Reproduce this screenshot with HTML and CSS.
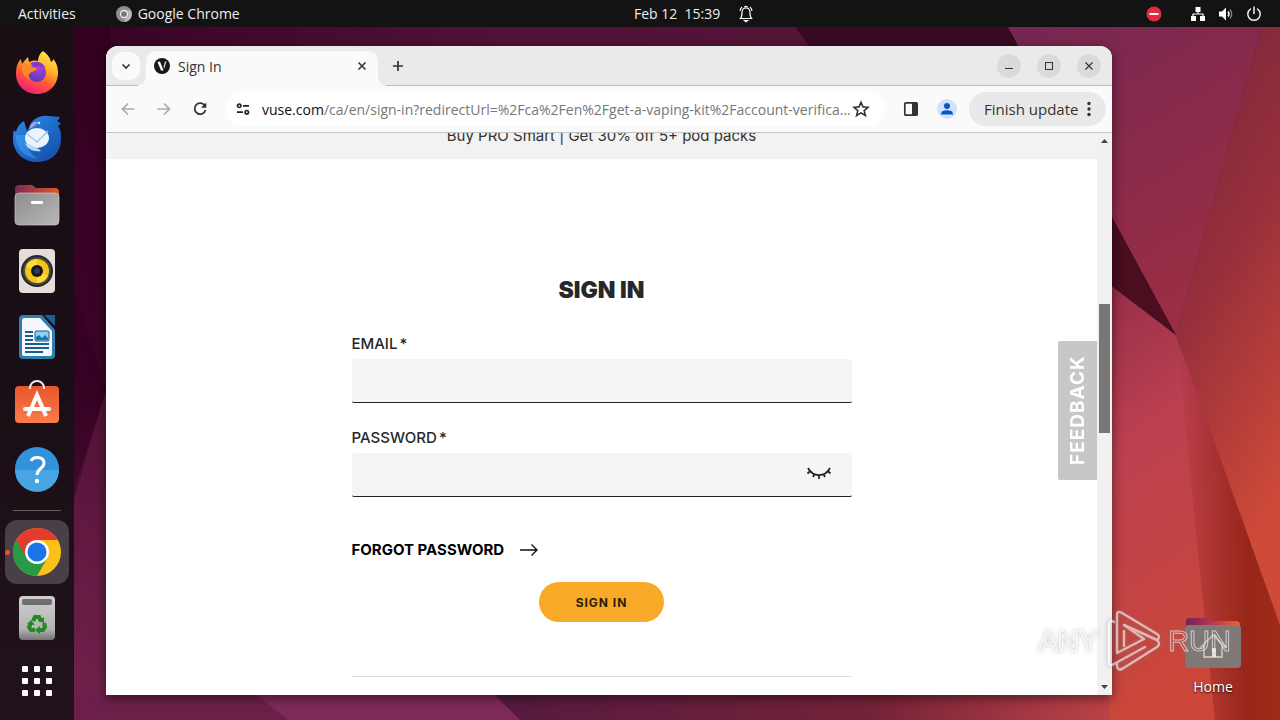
FILE: index.html
```html
<!DOCTYPE html>
<html lang="en">
<head>
<meta charset="UTF-8">
<title>Sign In</title>
<link rel="stylesheet" href="styles.css">
</head>
<body>

<!-- Wallpaper -->
<svg class="wallpaper" viewBox="0 0 1280 720" preserveAspectRatio="none" aria-hidden="true">
    <defs>
        <linearGradient id="wBase" x1="0" y1="0" x2="1" y2="1">
            <stop offset="0" stop-color="#2c001e"/>
            <stop offset=".3" stop-color="#470c32"/>
            <stop offset=".6" stop-color="#5c1a3c"/>
            <stop offset="1" stop-color="#7a2038"/>
        </linearGradient>
        <linearGradient id="wLeft" x1="0" y1="0" x2="0" y2="1">
            <stop offset="0" stop-color="#33001f"/>
            <stop offset=".5" stop-color="#3c0428"/>
            <stop offset="1" stop-color="#6e2149"/>
        </linearGradient>
        <linearGradient id="wTop" x1="0" y1="0" x2="1" y2="0">
            <stop offset="0" stop-color="#330020"/>
            <stop offset=".5" stop-color="#521236"/>
            <stop offset="1" stop-color="#571636"/>
        </linearGradient>
        <linearGradient id="wUpper" x1="0" y1="0" x2=".5" y2="1">
            <stop offset="0" stop-color="#762652"/>
            <stop offset="1" stop-color="#9a2e44"/>
        </linearGradient>
        <linearGradient id="wRight" x1="0" y1="0" x2=".3" y2="1">
            <stop offset="0" stop-color="#74233c"/>
            <stop offset=".5" stop-color="#98303b"/>
            <stop offset="1" stop-color="#cf4a38"/>
        </linearGradient>
        <linearGradient id="wLower" x1="0" y1="0" x2=".3" y2="1">
            <stop offset="0" stop-color="#8f2b48"/>
            <stop offset=".4" stop-color="#bb4050"/>
            <stop offset="1" stop-color="#cc4738"/>
        </linearGradient>
        <linearGradient id="wFold" x1="0" y1="0" x2="1" y2="0">
            <stop offset="0" stop-color="#8c2323" stop-opacity="0"/>
            <stop offset=".7" stop-color="#962619"/>
            <stop offset="1" stop-color="#a02c18"/>
        </linearGradient>
        <linearGradient id="wBottom" x1="0" y1="0" x2="1" y2="0">
            <stop offset="0" stop-color="#551a40"/>
            <stop offset=".6" stop-color="#752238"/>
            <stop offset="1" stop-color="#c04448"/>
        </linearGradient>
    </defs>
    <rect width="1280" height="720" fill="url(#wBase)"/>
    <rect y="0" width="1010" height="60" fill="url(#wTop)"/>
    <path d="M0 27H110V720H0Z" fill="url(#wLeft)"/>
    <path d="M74 490L106 390V720H74Z" fill="#7a2852" opacity=".35"/>
    <path d="M74 290L106 390L74 500Z" fill="#28001a" opacity=".35"/>
    <path d="M0 690H270L290 720H0Z" fill="#6c2049"/>
    <path d="M250 690H490L520 720H288Z" fill="#7e2a59"/>
    <path d="M490 690H1125V720H520Z" fill="url(#wBottom)"/>
    <path d="M795 27H1010L1040 100H850Z" fill="#370a22"/>
    <path d="M1008 27H1262L1176 335L1100 195Z" fill="url(#wUpper)"/>
    <path d="M1090 270L1176 335L1280 612V720H1110Z" fill="url(#wLower)"/>
    <path d="M1176 335L1280 600V720H1215Z" fill="url(#wFold)"/>
    <path d="M1262 27H1280V625L1176 335Z" fill="url(#wRight)"/>
    <path d="M1100 195L1176 335L1100 277Z" fill="#4a0e1e"/>
</svg>

<!-- Top Bar -->
<header class="topbar">
    <div class="topbar-left">
        <button class="topbar-item">Activities</button>
        <button class="topbar-item topbar-app">
            <svg width="16" height="16" viewBox="0 0 16 16"><circle cx="8" cy="8" r="8" fill="#8d8d8d"/><path d="M8 4.500H15A8 8 0 0 1 8 16L11 9Z" fill="#b9b9b9"/><circle cx="8" cy="8" r="3.500" fill="#777" stroke="#eee" stroke-width="1.300"/></svg>
            Google Chrome
        </button>
    </div>
    <button class="topbar-item topbar-clock">
        <span>Feb 12&nbsp; 15:39</span>
        <svg width="16" height="18" viewBox="0 0 16 18" fill="none" stroke="#fff" stroke-width="1.200"><path d="M2.500 13.500C4 12 4 10 4 7.500C4 4.500 5.500 3 8 3S12 4.500 12 7.500C12 10 12 12 13.500 13.500Z"/><path d="M6.500 2.500C6.500 1 9.500 1 9.500 2.500M2 6Q2.300 3.500 4 2M14 6Q13.700 3.500 12 2"/><path d="M6.500 15.500H9.500L8 16.800Z" fill="#fff"/></svg>
    </button>
    <div class="topbar-status">
        <svg class="status-stop" width="16" height="16" viewBox="0 0 16 16"><circle cx="8" cy="8" r="7.500" fill="#e32b3e"/><rect x="3.500" y="7" width="9" height="2" fill="#fff"/></svg>
        <svg width="16" height="16" viewBox="0 0 16 16" fill="#fff"><rect x="5.500" y="1" width="5" height="5"/><rect x="1" y="10" width="5" height="5"/><rect x="10" y="10" width="5" height="5"/><path d="M3 11V8H13V11M8 5V8" fill="none" stroke="#fff" stroke-width="1.200"/></svg>
        <svg width="16" height="16" viewBox="0 0 16 16"><path d="M1 5.500H4L8 1.500V14.500L4 10.500H1Z" fill="#fff"/><path d="M10 5.500Q12 8 10 10.500" fill="none" stroke="#fff" stroke-width="1.500"/><path d="M12 3.500Q15.500 8 12 12.500" fill="none" stroke="#888" stroke-width="1.300"/></svg>
        <svg width="16" height="16" viewBox="0 0 16 16" fill="none" stroke="#fff" stroke-width="1.400" stroke-linecap="round"><path d="M4.500 3A6.200 6.200 0 1 0 11.500 3M8 1V7.500"/></svg>
    </div>
</header>

<div class="desktop">

    <!-- Dock -->
    <nav class="dock" aria-label="Dock">
        <button class="dock-item" aria-label="Firefox">
            <svg viewBox="0 0 48 48">
                <defs>
                    <linearGradient id="ffBody" x1=".8" y1="0" x2=".3" y2="1"><stop offset="0" stop-color="#fff04a"/><stop offset=".35" stop-color="#ffb52b"/><stop offset=".65" stop-color="#ff5a36"/><stop offset="1" stop-color="#f3197e"/></linearGradient>
                    <radialGradient id="ffCore" cx=".6" cy=".2" r=".9"><stop offset="0" stop-color="#b13fe0"/><stop offset="1" stop-color="#493bb5"/></radialGradient>
                </defs>
                <path d="M30 2C34 5 37 8 38 13C40 12 40 11 40 10C44 14 45 19 45 24C45 36 36 45 24 45S3 36 3 25C3 19 4 14 8 10L9 15C11 12 13 10 15 8L16 13C19 12 21 11 25 12C25 8 27 4 30 2Z" fill="url(#ffBody)"/>
                <circle cx="24" cy="24" r="9" fill="url(#ffCore)"/>
                <path d="M17 15C21 11 30 12 33 20C29 16 25 17 23 18Z" fill="#8438cf"/>
                <path d="M9 15C13 15 16 18 24 19C23 23 19 22 17 24C15 26 15 29 17 31C11 29 8 22 9 15Z" fill="#ff8a25"/>
            </svg>
        </button>
        <button class="dock-item" aria-label="Thunderbird">
            <svg viewBox="0 0 48 48">
                <defs><linearGradient id="tbBody" x1="0" y1="0" x2=".8" y2="1"><stop offset="0" stop-color="#2b8ce8"/><stop offset=".6" stop-color="#1c68c8"/><stop offset="1" stop-color="#174fa8"/></linearGradient></defs>
                <path d="M17 10C20 3 29 0 35 1C40 1 43 2 47 2C46 4 45 5 44 6C46 7 47 8 48 9L45 11C48 15 48 19 48 24C48 38 38 47 24 47S0 37 0 24C0 20 0 17 1 15L3 17C4 13 6 9 11 6C12 10 13 13 14 16Z" fill="url(#tbBody)"/>
                <path d="M2 20C4 34 10 42 25 44C14 37 12 28 13 20Z" fill="#4aa2f4" opacity=".5"/>
                <ellipse cx="24" cy="23" rx="12" ry="10" fill="#e9f4fc"/>
                <path d="M14 19L24 27L35 16" fill="none" stroke="#a9c7df" stroke-width="1.500"/>
                <path d="M18 30C22 33 24 32 28 36C20 37 14 34 12 28Z" fill="#b8daf8"/>
                <path d="M17 11Q20 6 25 7Q23 10 17 14Z" fill="#a9a0ec"/><circle cx="26" cy="8" r="1.300" fill="#d8ecff"/>
            </svg>
        </button>
        <button class="dock-item" aria-label="Files">
            <svg viewBox="0 0 48 48">
                <defs>
                    <linearGradient id="fBack" x1="0" y1="0" x2="1" y2="0"><stop offset="0" stop-color="#7a2a58"/><stop offset="1" stop-color="#e4562a"/></linearGradient>
                    <linearGradient id="fFront" x1="0" y1="0" x2="1" y2="1"><stop offset="0" stop-color="#8d8d8d"/><stop offset="1" stop-color="#b8b8b8"/></linearGradient>
                </defs>
                <path d="M6 4H19L23 7H42Q46 7 46 11V20H2V8Q2 4 6 4Z" fill="url(#fBack)"/>
                <rect x="2" y="12" width="44" height="32" rx="4" fill="url(#fFront)"/>
                <rect x="2" y="12" width="44" height="32" rx="4" fill="none" stroke="#c9c9c9" stroke-width=".7"/>
                <rect x="18" y="20" width="12" height="3" rx="1" fill="#fff"/>
            </svg>
        </button>
        <button class="dock-item" aria-label="Rhythmbox">
            <svg viewBox="0 0 48 48">
                <rect x="6" y="2" width="36" height="44" rx="4" fill="#e3dfd6"/>
                <circle cx="24" cy="24" r="16" fill="#26262c"/><circle cx="24" cy="24" r="14" fill="#4c4a42"/>
                <circle cx="24" cy="24" r="12" fill="#f5c518"/><path d="M13 19A12 12 0 0 1 24 12V24ZM35 29A12 12 0 0 1 24 36V24Z" fill="#ffd93b"/>
                <circle cx="24" cy="24" r="6" fill="#17181e"/><circle cx="24" cy="24" r="3" fill="#2d3b52"/>
            </svg>
        </button>
        <button class="dock-item" aria-label="LibreOffice Writer">
            <svg viewBox="0 0 48 48">
                <path d="M10 2H29L42 17V42Q42 46 38 46H10Q6 46 6 42V6Q6 2 10 2Z" fill="#2f7fae"/>
                <path d="M31 2H42V13Z" fill="#1c5f8c"/>
                <path d="M11 5H27L39 18V41Q39 43 37 43H11Q9 43 9 41V7Q9 5 11 5Z" fill="#f4f8fb"/>
                <g fill="#1a5f8c"><rect x="12" y="18" width="8" height="2"/><rect x="12" y="22" width="8" height="2"/><rect x="12" y="26" width="8" height="2"/><rect x="12" y="30" width="24" height="2"/><rect x="12" y="34" width="24" height="2"/><rect x="12" y="38" width="18" height="2"/></g>
                <rect x="22" y="18" width="14" height="10" rx="1" fill="#8fd0f5" stroke="#1a5f8c"/>
                <path d="M23 27V24L26 22L29 25L32 22L35 25V27Z" fill="#1875b0"/>
            </svg>
        </button>
        <button class="dock-item" aria-label="Ubuntu Software">
            <svg viewBox="0 0 48 48">
                <defs><linearGradient id="bag" x1="0" y1="0" x2="0" y2="1"><stop offset="0" stop-color="#e9552b"/><stop offset="1" stop-color="#fb7c4a"/></linearGradient></defs>
                <rect x="2" y="7" width="44" height="37" rx="4" fill="url(#bag)"/>
                <path d="M17 10V9A7 7 0 0 1 31 9V10" fill="none" stroke="#f6e6df" stroke-width="2"/>
                <path d="M15 37L24 16L33 37" fill="none" stroke="#fff" stroke-width="4"/>
                <rect x="10" y="28" width="28" height="4" rx="2" fill="#fff"/>
            </svg>
        </button>
        <button class="dock-item" aria-label="Help">
            <svg viewBox="0 0 48 48">
                <circle cx="24" cy="24" r="22" fill="#3293dc"/><path d="M2 25H46A22 22 0 0 1 2 25Z" fill="#46a5e2"/>
                <path d="M18 16C20 11 31 11 31 18C31 24 24 23 24 30" fill="none" stroke="#fff" stroke-width="3"/><circle cx="24" cy="36" r="2.200" fill="#fff"/>
            </svg>
        </button>
        <hr class="dock-line">
        <button class="dock-item dock-active" aria-label="Google Chrome">
            <svg viewBox="0 0 48 48">
                <circle cx="24" cy="24" r="24" fill="#fbc116"/>
                <path d="M3.200 12A24 24 0 0 0 24 48L34.400 30L24 24Z" fill="#269a45"/>
                <path d="M3.200 12A24 24 0 0 1 44.800 12H24L13.600 30Z" fill="#e33b2e"/>
                <circle cx="24" cy="24" r="12" fill="#fff"/><circle cx="24" cy="24" r="9.500" fill="#1a73e8"/>
            </svg>
        </button>
        <button class="dock-item" aria-label="Trash">
            <svg viewBox="0 0 48 48">
                <defs><linearGradient id="bin" x1="0" y1="0" x2="0" y2="1"><stop offset="0" stop-color="#cfcfcf"/><stop offset=".75" stop-color="#b4b4b4"/><stop offset="1" stop-color="#757275"/></linearGradient></defs>
                <rect x="6" y="2" width="36" height="44" rx="4" fill="url(#bin)"/>
                <rect x="9" y="5" width="30" height="6" rx="2" fill="#6f6f6f"/>
                <g fill="none" stroke="#248a24" stroke-width="4"><path d="M20 27L22 23H26L28 27"/><path d="M31 29L32 33L30 36H26"/><path d="M22 36H18L16 33L18 29"/></g>
                <path d="M25 27L31 29L31 23ZM27 32V40L22 36ZM14 30L18 26L22 31Z" fill="#248a24"/>
            </svg>
        </button>
        <button class="dock-item dock-apps" aria-label="Show Applications">
            <svg viewBox="0 0 48 48" fill="#fff"><rect x="9" y="9" width="6" height="6" rx="1"/><rect x="21" y="9" width="6" height="6" rx="1"/><rect x="33" y="9" width="6" height="6" rx="1"/><rect x="9" y="21" width="6" height="6" rx="1"/><rect x="21" y="21" width="6" height="6" rx="1"/><rect x="33" y="21" width="6" height="6" rx="1"/><rect x="9" y="33" width="6" height="6" rx="1"/><rect x="21" y="33" width="6" height="6" rx="1"/><rect x="33" y="33" width="6" height="6" rx="1"/></svg>
        </button>
    </nav>

    <!-- Browser Window -->
    <main class="workspace">
        <div class="window">
            <div class="tabstrip">
                <button class="tab-search" aria-label="Search tabs"><svg width="12" height="12" viewBox="0 0 12 12"><path d="M2.500 4.500L6 8L9.500 4.500" fill="none" stroke="#333" stroke-width="1.700"/></svg></button>
                <div class="tab">
                    <svg width="16" height="16" viewBox="0 0 16 16"><circle cx="8" cy="8" r="8" fill="#16171a"/><path d="M3.500 4L7 12.500H9.500L6 3.500Z" fill="#fff"/><path d="M9.500 9L11 3.500H12.500L10 11Z" fill="#ddd"/></svg>
                    <span class="tab-title">Sign In</span>
                    <button class="icon-btn" aria-label="Close tab"><svg width="12" height="12" viewBox="0 0 12 12"><path d="M2.500 2.500L9.500 9.500M9.500 2.500L2.500 9.500" stroke="#333" stroke-width="1.600"/></svg></button>
                </div>
                <button class="icon-btn new-tab" aria-label="New tab"><svg width="12" height="12" viewBox="0 0 12 12"><path d="M6 1V11M1 6H11" stroke="#333" stroke-width="1.700"/></svg></button>
                <div class="window-controls">
                    <button aria-label="Minimize"><svg width="12" height="12" viewBox="0 0 12 12"><path d="M2 8.500H10" stroke="#333"/></svg></button>
                    <button aria-label="Maximize"><svg width="12" height="12" viewBox="0 0 12 12"><rect x="2.500" y="2.500" width="7" height="7" fill="none" stroke="#333"/></svg></button>
                    <button aria-label="Close"><svg width="12" height="12" viewBox="0 0 12 12"><path d="M2.500 2.500L9.500 9.500M9.500 2.500L2.500 9.500" stroke="#333" stroke-width="1.200"/></svg></button>
                </div>
            </div>

            <div class="toolbar">
                <button class="tool-btn" aria-label="Back"><svg width="16" height="16" viewBox="0 0 16 16"><path d="M14.500 8H2.500M8 2.500L2.500 8L8 13.500" fill="none" stroke="#aaa" stroke-width="1.700"/></svg></button>
                <button class="tool-btn" aria-label="Forward"><svg width="16" height="16" viewBox="0 0 16 16"><path d="M1.500 8H13.500M8 2.500L13.500 8L8 13.500" fill="none" stroke="#aaa" stroke-width="1.700"/></svg></button>
                <button class="tool-btn" aria-label="Reload"><svg width="16" height="16" viewBox="0 0 16 16"><path d="M13 5A5.500 5.500 0 1 0 13.500 9" fill="none" stroke="#333" stroke-width="1.800"/><path d="M14.300 1.500V6.700H9Z" fill="#333"/></svg></button>
                <div class="urlbar">
                    <button class="site-btn" aria-label="View site information"><svg width="14" height="14" viewBox="0 0 14 14" fill="none" stroke="#222" stroke-width="1.700"><circle cx="3.200" cy="3.800" r="1.700"/><path d="M7 3.800H13M1 10.200H7"/><circle cx="10.800" cy="10.200" r="1.700"/></svg></button>
                    <div class="url" role="textbox" aria-label="Address"><b>vuse.com</b>/ca/en/sign-in?redirectUrl=%2Fca%2Fen%2Fget-a-vaping-kit%2Faccount-verifica…</div>
                    <button class="icon-btn" aria-label="Bookmark this tab"><svg width="18" height="18" viewBox="0 0 18 18"><path d="M9 2.200L11 6.900L16 7.300L12.200 10.600L13.400 15.500L9 12.900L4.600 15.500L5.800 10.600L2 7.300L7 6.900Z" fill="none" stroke="#333" stroke-width="1.600"/></svg></button>
                </div>
                <button class="tool-btn" aria-label="Side panel"><svg width="16" height="16" viewBox="0 0 16 16"><rect x="1.800" y="1.800" width="12.400" height="12.400" rx="1" fill="none" stroke="#333" stroke-width="1.700"/><path d="M9 2H14V14H9Z" fill="#333"/></svg></button>
                <button class="tool-btn" aria-label="Profile"><svg width="20" height="20" viewBox="0 0 20 20"><circle cx="10" cy="10" r="10" fill="#d0e2fc"/><circle cx="10" cy="7" r="3" fill="#0b57c0"/><path d="M4 15.500C4 12 7 11.300 10 11.300S16 12 16 15.500Z" fill="#0b57c0"/></svg></button>
                <button class="update-btn">Finish update <svg width="4" height="16" viewBox="0 0 4 16" fill="#333"><circle cx="2" cy="2.500" r="1.700"/><circle cx="2" cy="8" r="1.700"/><circle cx="2" cy="13.500" r="1.700"/></svg></button>
            </div>

            <!-- Page -->
            <div class="viewport">
                <div class="page">
                    <p class="promo">Buy PRO Smart | Get 30% off 5+ pod packs</p>
                    <form class="login">
                        <h1>SIGN IN</h1>
                        <label for="email">EMAIL<span>*</span></label>
                        <div class="field"><input type="email" id="email"></div>
                        <label for="password">PASSWORD<span>*</span></label>
                        <div class="field">
                            <input type="password" id="password">
                            <button type="button" class="show-pass" aria-label="Show password"><svg width="26" height="16" viewBox="0 0 26 16" fill="none" stroke="#222" stroke-width="1.700"><path d="M2 3C7 12.500 19 12.500 24 3"/><path d="M4.300 6L1.500 8.500M21.700 6L24.500 8.500M8.500 9L7 12M17.500 9L19 12M13 10V14"/></svg></button>
                        </div>
                        <a class="forgot" href="#">FORGOT PASSWORD <svg width="18" height="12" viewBox="0 0 18 12"><path d="M0 6H17M11.500 .5L17 6L11.500 11.500" fill="none" stroke="#111" stroke-width="1.400"/></svg></a>
                        <button type="button" class="submit">SIGN IN</button>
                        <hr class="divider">
                    </form>
                </div>
                <div class="scrollbar">
                    <svg width="15" height="16" viewBox="0 0 15 16"><path d="M4 10L7.500 6L11 10Z" fill="#444"/></svg>
                    <div class="scroll-track"><div class="scroll-thumb"></div></div>
                    <svg width="15" height="16" viewBox="0 0 15 16"><path d="M4 6L7.500 10L11 6Z" fill="#444"/></svg>
                </div>
                <button class="feedback">FEEDBACK</button>
            </div>
        </div>

        <a class="home" href="#">
            <svg width="56" height="52" viewBox="0 0 56 52">
                <defs><linearGradient id="hBack" x1="0" y1="0" x2="1" y2="0"><stop offset="0" stop-color="#762056"/><stop offset=".5" stop-color="#b8385a"/><stop offset="1" stop-color="#f0602a"/></linearGradient></defs>
                <path d="M5 1H21L26 4H51Q55 4 55 8V20H1V5Q1 1 5 1Z" fill="url(#hBack)"/>
                <rect x="0" y="8" width="56" height="43" rx="4" fill="#807876"/>
                <path d="M15 31L28 18L41 31M19 29V40H37V29" fill="none" stroke="#c4bdba" stroke-width="1.800"/><rect x="27" y="31" width="4" height="9" fill="#e6e2e0"/>
            </svg>
            Home
        </a>
    </main>
</div>

<!-- Watermark -->
<div class="watermark">
    <span>ANY</span>
    <svg width="56" height="64" viewBox="0 0 56 64" fill="none" stroke="#fff" stroke-width="2.500" stroke-linejoin="round" stroke-linecap="round"><path d="M9 13Q4 10 4 16V54Q4 58 9 55L40 38"/><path d="M12 42V6Q12 1 17 4L52 25Q56 28 52 31L19 16"/><path d="M19 16L39 30L12 44"/><path d="M19 22V37"/><path d="M52 31Q56 35 52 38L17 60Q12 62 12 56V54"/></svg>
    <span>RUN</span>
</div>

</body>
</html>
```
FILE: styles.css
```css
/* General */
* {
    box-sizing: border-box;
}

html, body {
    margin: 0;
    padding: 0;
    height: 100%;
}

body {
    display: flex;
    flex-direction: column;
    overflow: hidden;
    background: #2c001e;
    color: #333;
    font-family: "Open Sans", "Noto Sans", sans-serif;
    font-size: 14px;
}

button {
    margin: 0;
    padding: 0;
    border: 0;
    background: none;
    color: inherit;
    font: inherit;
    cursor: pointer;
}

svg {
    display: block;
    flex: none;
}

.wallpaper {
    position: absolute;
    top: 0;
    left: 0;
    width: 100%;
    height: 100%;
    z-index: -1;
}

/* Top bar */
.topbar {
    display: flex;
    align-items: center;
    height: 27px;
    flex: none;
    background: #131313;
    color: #eee;
}

.topbar-left {
    display: flex;
    gap: 40px;
    width: 50%;
    padding-left: 18px;
    margin-right: -6px;
}

.topbar-item {
    display: flex;
    align-items: center;
    gap: 6px;
}

.topbar-clock {
    gap: 18px;
}

.topbar-status {
    display: flex;
    gap: 12px;
    margin-left: auto;
    padding-right: 18px;
}

.status-stop {
    margin-right: 16px;
}

.desktop {
    display: flex;
    flex: 1;
    min-height: 0;
}

/* Dock */
.dock {
    display: flex;
    flex-direction: column;
    flex: none;
    align-items: center;
    gap: 2px;
    width: 74px;
    padding-top: 14px;
    background: rgba(20, 16, 19, 0.85);
}

.dock-item {
    display: flex;
    align-items: center;
    justify-content: center;
    position: relative;
    width: 64px;
    height: 64px;
    flex: none;
    border-radius: 12px;
}

.dock-item svg {
    width: 48px;
    height: 48px;
}

.dock-active {
    background: #484046;
}

.dock-active::before {
    content: "";
    position: absolute;
    left: 0;
    width: 5px;
    height: 5px;
    border-radius: 50%;
    background: #e95420;
}

.dock-line {
    width: 48px;
    height: 1px;
    flex: none;
    margin: 7px 0;
    border: 0;
    background: #655c61;
}

.dock-apps {
    height: 58px;
}

/* Browser window */
.workspace {
    display: flex;
    position: relative;
    flex: 1;
    min-width: 0;
    padding: 19px 168px 25px 32px;
}

.window {
    display: flex;
    flex-direction: column;
    flex: 1;
    min-width: 0;
    overflow: hidden;
    border-radius: 12px 12px 0 0;
    background: #fff;
    box-shadow: 0 3px 12px rgba(0, 0, 0, 0.5);
}

.tabstrip {
    display: flex;
    align-items: center;
    height: 40px;
    flex: none;
    padding: 0 11px 0 6px;
    border-bottom: 1px solid #bdbdbd;
    background: #eaeaea;
}

.tab-search {
    display: grid;
    place-items: center;
    width: 28px;
    height: 28px;
    border-radius: 10px;
    background: #fafafa;
}

.tab {
    display: flex;
    align-items: center;
    gap: 8px;
    position: relative;
    align-self: flex-end;
    width: 232px;
    height: 35px;
    margin: 0 8px -1px 6px;
    padding: 0 4px 5px 8px;
    border-radius: 10px 10px 0 0;
    background: #fafafa;
}

/* flared feet of the tab */
.tab::before, .tab::after {
    content: "";
    position: absolute;
    bottom: 0;
    width: 8px;
    height: 8px;
}

.tab::before {
    left: -8px;
    background: radial-gradient(circle at 0 0, #eaeaea 7px, #fafafa 8px);
}

.tab::after {
    right: -8px;
    background: radial-gradient(circle at 100% 0, #eaeaea 7px, #fafafa 8px);
}

.tab-title {
    flex: 1;
}

.icon-btn {
    display: grid;
    place-items: center;
    width: 24px;
    height: 24px;
}

.window-controls {
    display: flex;
    gap: 16px;
    margin-left: auto;
}

.window-controls button {
    display: grid;
    place-items: center;
    width: 24px;
    height: 24px;
    border-radius: 50%;
    background: #dadada;
}

.toolbar {
    display: flex;
    align-items: center;
    gap: 4px;
    height: 47px;
    flex: none;
    padding: 0 6px;
    border-bottom: 1px solid #c4c4c4;
    background: #fafafa;
}

.tool-btn {
    display: grid;
    place-items: center;
    width: 32px;
    height: 32px;
}

.urlbar {
    display: flex;
    align-items: center;
    flex: 1;
    min-width: 0;
    height: 34px;
    margin: 0 6px;
    padding: 0 12px 0 10px;
    border-radius: 17px;
    background: #fff;
}

.site-btn {
    margin-right: 12px;
}

.url {
    flex: 1;
    min-width: 0;
    white-space: nowrap;
    color: #777;
}

.url b {
    color: #111;
    font-weight: 400;
}

.update-btn {
    display: flex;
    align-items: center;
    justify-content: space-between;
    width: 137px;
    height: 34px;
    margin-left: 2px;
    padding: 0 15px;
    border-radius: 17px;
    background: #e9e9e9;
    font-size: 15px;
}

/* Page */
.viewport {
    display: flex;
    position: relative;
    flex: 1;
    min-height: 0;
    overflow: hidden;
}

.page {
    flex: 1;
    overflow: hidden;
    font-family: Inter, sans-serif;
}

.promo {
    margin: -20px 0 0;
    background: #f2f2f2;
    font-size: 15px;
    line-height: 46px;
    text-align: center;
}

.login {
    display: flex;
    flex-direction: column;
    max-width: 500px;
    margin: 0 auto;
    padding-top: 115px;
    color: #26282a;
}

.login h1 {
    margin: 0 0 28px;
    font-size: 23px;
    font-weight: 900;
    line-height: 32px;
    text-align: center;
}

.login label {
    margin-bottom: 5px;
    font-size: 15px;
    font-weight: 500;
    line-height: 20px;
}

.login label span {
    margin-left: 2px;
}

.field {
    display: flex;
    align-items: center;
    height: 44px;
    margin-bottom: 25px;
    border-bottom: 1px solid #222;
    border-radius: 2px;
    background: #f5f5f5;
}

.field input {
    flex: 1;
    height: 100%;
    padding: 0 12px;
    border: 0;
    outline: 0;
    background: none;
}

.show-pass {
    padding: 0 20px 4px 0;
}

.forgot {
    display: flex;
    align-items: center;
    gap: 16px;
    margin: 18px 0 22px;
    color: #000;
    font-size: 15px;
    font-weight: 700;
    line-height: 20px;
    text-decoration: none;
}

.submit {
    align-self: center;
    width: 125px;
    height: 40px;
    border-radius: 20px;
    background: #f9a928;
    color: #2a1c05;
    font-size: 12px;
    font-weight: 700;
    letter-spacing: 1px;
}

.divider {
    width: 100%;
    margin: 54px 0 0;
    border: 0;
    border-top: 1px solid #ddd;
}

.scrollbar {
    display: flex;
    flex-direction: column;
    width: 15px;
    background: #f1f1f1;
}

.scroll-track {
    display: grid;
    grid-template-rows: 155fr 129fr 246fr;
    flex: 1;
    padding: 0 2px;
}

.scroll-thumb {
    grid-row: 2;
    background: #777;
}

.feedback {
    position: absolute;
    top: 37%;
    right: 15px;
    width: 39px;
    height: 139px;
    border-radius: 0 2px 2px 0;
    background: #c8c6c6;
    color: #fff;
    font-family: Inter, sans-serif;
    font-size: 19px;
    font-weight: 700;
    letter-spacing: 1px;
    writing-mode: vertical-rl;
    transform: rotate(180deg);
}

/* Desktop icon */
.home {
    display: flex;
    flex-direction: column;
    align-items: center;
    gap: 8px;
    position: absolute;
    right: 39px;
    bottom: 23px;
    color: #fff;
    line-height: 20px;
    text-decoration: none;
    text-shadow: 0 1px 2px #000;
}

/* Watermark */
.watermark {
    display: flex;
    align-items: center;
    gap: 7px;
    position: absolute;
    right: 49px;
    bottom: 47px;
    color: transparent;
    font-family: "Liberation Sans", sans-serif;
    font-size: 29px;
    -webkit-text-stroke: 1px #fff;
    filter: drop-shadow(0 0 2px #777);
    opacity: 0.6;
    pointer-events: none;
}
```
